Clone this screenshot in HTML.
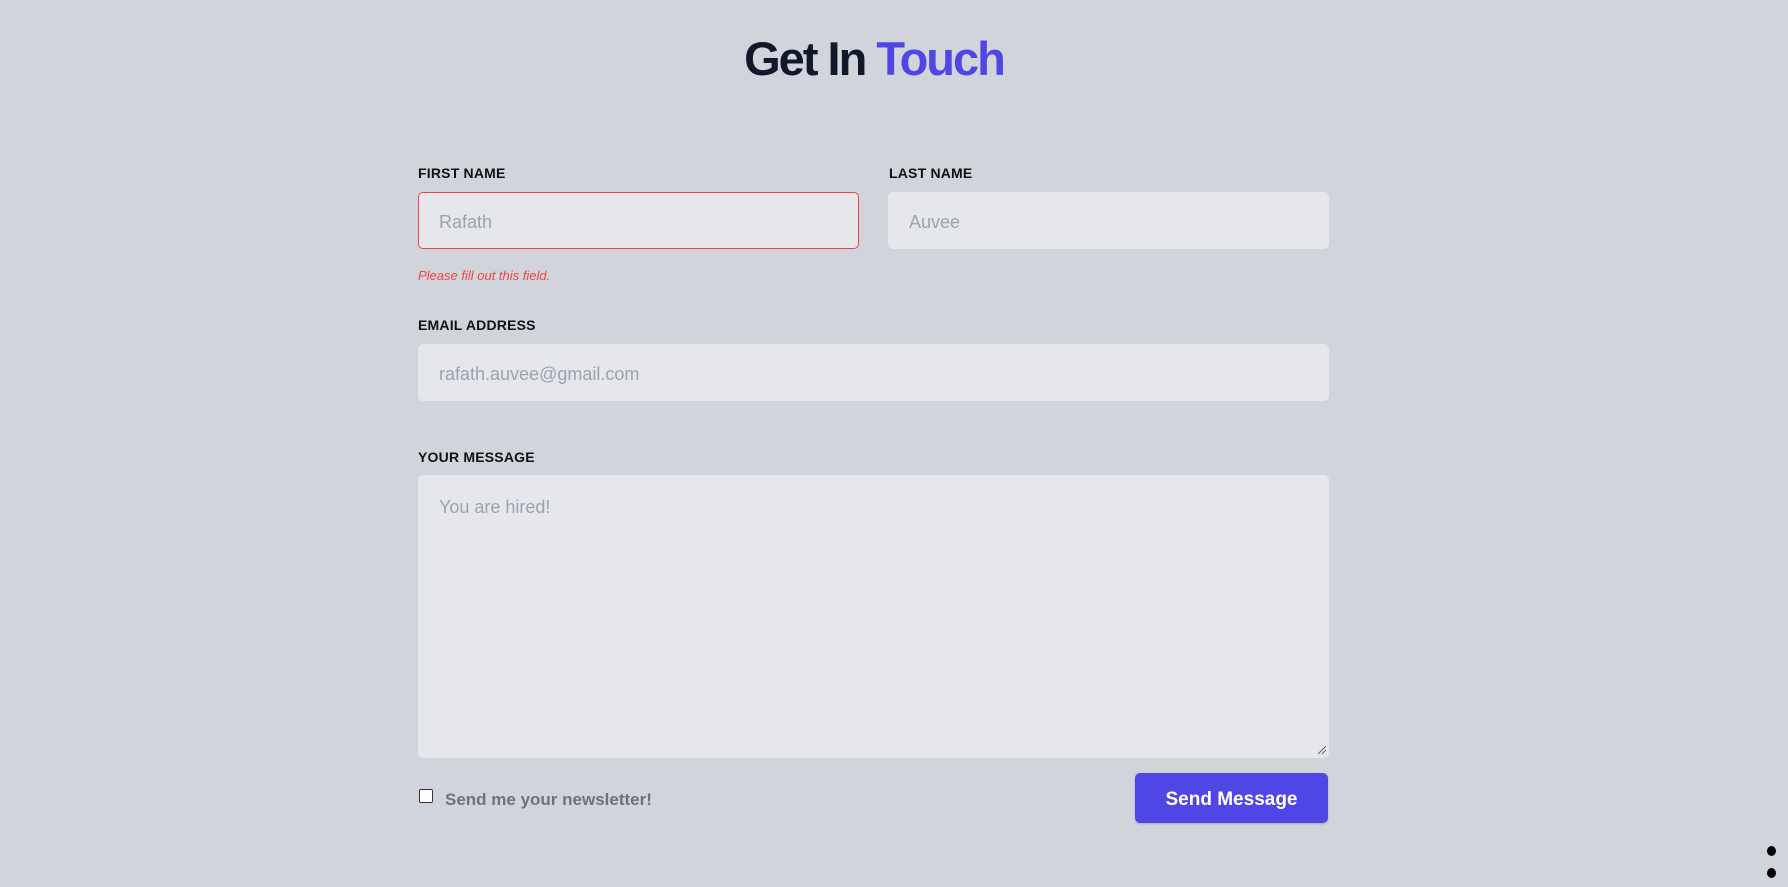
<!DOCTYPE html>
<html><head><meta charset="utf-8"><style>
*{box-sizing:border-box;margin:0;padding:0}
body{width:1788px;height:887px;background:#d1d5db;font-family:"Liberation Sans",sans-serif;position:relative;overflow:hidden}
h1{position:absolute;left:0;width:1748px;text-align:center;top:31px;font-size:47px;font-weight:bold;color:#111827;letter-spacing:-2px}
h1 span{color:#4f46e5}
.lbl{position:absolute;font-size:14px;font-weight:bold;color:#111;letter-spacing:.2px}
.in{position:absolute;background:#e5e7eb;border-radius:5px;color:#9ca3af;font-size:18px;padding-left:21px;padding-top:4px;display:flex;align-items:center}
.err{position:absolute;left:418px;top:268px;font-size:13px;font-style:italic;color:#ef4444}
.btn{position:absolute;left:1135px;top:773px;width:193px;height:50px;background:#4f46e5;border-radius:5px;color:#fff;font-weight:bold;font-size:19px;display:flex;align-items:center;justify-content:center;padding-top:3px;box-shadow:0 1px 2px rgba(0,0,0,.2)}
.dot{position:absolute;left:1767px;width:9px;height:10px;border-radius:50%;background:#000}
</style></head><body>
<h1>Get In <span>Touch</span></h1>
<div class="lbl" style="left:418px;top:165px">FIRST NAME</div>
<div class="lbl" style="left:889px;top:165px">LAST NAME</div>
<div class="in" style="left:418px;top:192px;width:441px;height:57px;border:1px solid #ef4444;padding-left:20px">Rafath</div>
<div class="in" style="left:888px;top:192px;width:441px;height:57px">Auvee</div>
<div class="err">Please fill out this field.</div>
<div class="lbl" style="left:418px;top:317px">EMAIL ADDRESS</div>
<div class="in" style="left:418px;top:344px;width:911px;height:57px">rafath.auvee@gmail.com</div>
<div class="lbl" style="left:418px;top:449px">YOUR MESSAGE</div>
<div class="in" style="left:418px;top:475px;width:911px;height:283px;align-items:flex-start;padding-top:22px">You are hired!</div>
<div style="position:absolute;left:1318px;top:746px;width:8px;height:8px;background:linear-gradient(135deg,transparent 45%,#666 45%,#666 55%,transparent 55%,transparent 70%,#666 70%,#666 80%,transparent 80%)"></div>
<div style="position:absolute;left:419px;top:789px;width:14px;height:14px;border:1.5px solid #333;background:#fff;border-radius:2px"></div>
<div style="position:absolute;left:445px;top:790px;font-size:17px;font-weight:bold;color:#6b7280">Send me your newsletter!</div>
<div class="btn">Send Message</div>
<div class="dot" style="top:846px"></div>
<div class="dot" style="top:868px"></div>
</body></html>
